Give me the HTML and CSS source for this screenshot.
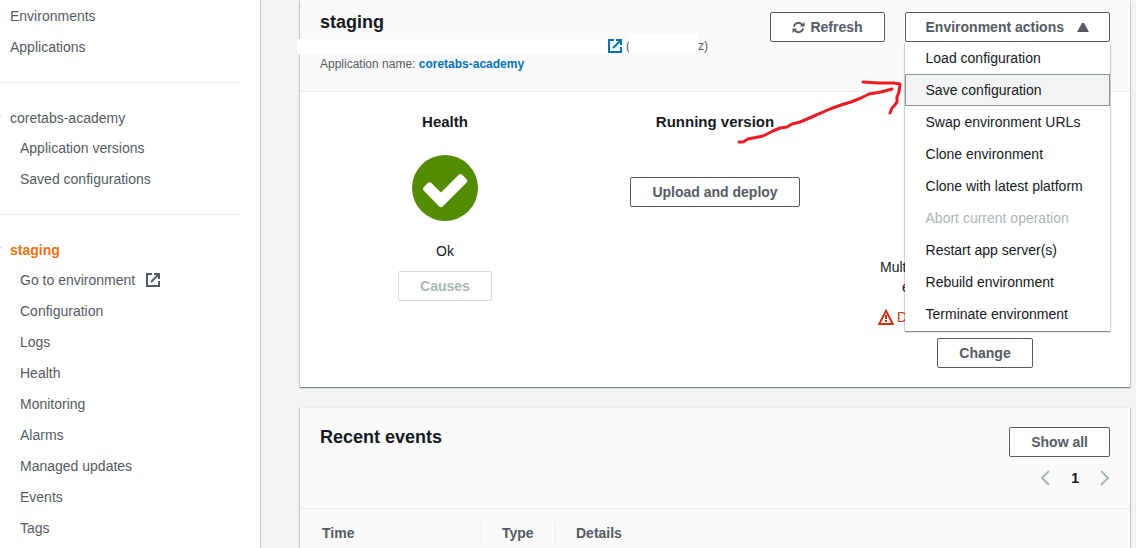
FILE: index.html
```html
<!DOCTYPE html>
<html lang="en">
<head>
<meta charset="utf-8">
<title>staging</title>
<link rel="stylesheet" href="styles.css">
</head>
<body>
<div class="shell">
  <nav class="sidebar">
    <ul class="nav-group">
      <li><a href="#">Environments</a></li>
      <li><a href="#">Applications</a></li>
    </ul>
    <div class="nav-section">
      <a class="nav-title" href="#">coretabs-academy</a>
      <ul class="nav-group nested">
        <li><a href="#">Application versions</a></li>
        <li><a href="#">Saved configurations</a></li>
      </ul>
    </div>
    <div class="nav-section">
      <a class="nav-title current" href="#">staging</a>
      <ul class="nav-group nested">
        <li><a href="#">Go to environment
          <svg class="external" viewBox="0 0 14 14" aria-hidden="true"><path d="M6 1H1v12h12V8M8 1h5v5M13 1L5 9"/></svg></a></li>
        <li><a href="#">Configuration</a></li>
        <li><a href="#">Logs</a></li>
        <li><a href="#">Health</a></li>
        <li><a href="#">Monitoring</a></li>
        <li><a href="#">Alarms</a></li>
        <li><a href="#">Managed updates</a></li>
        <li><a href="#">Events</a></li>
        <li><a href="#">Tags</a></li>
      </ul>
    </div>
  </nav>

  <main class="content">
    <section class="card overview">
      <header class="card-header">
        <div class="summary">
          <h1>staging</h1>
          <div class="url-row">
            <span class="mask mask-url"></span>
            <a href="#" aria-label="Open environment"><svg class="external" viewBox="0 0 14 14" aria-hidden="true"><path d="M6 1H1v12h12V8M8 1h5v5M13 1L5 9"/></svg></a>
            <span class="env-id">(<span class="mask mask-id"></span>z)</span>
          </div>
          <p class="app-name">Application name: <a href="#">coretabs-academy</a></p>
        </div>
        <div class="actions">
          <button class="btn" type="button">
            <svg class="refresh" viewBox="0 0 14 14" aria-hidden="true"><path class="arc" d="M2 6a5 5 0 0 1 8.500-2.500L12 5M12 8a5 5 0 0 1-8.500 2.500L2 9"/><path class="head" d="M13.500 1v5h-5zM.5 13V8h5z"/></svg>
            Refresh</button>
          <div class="dropdown">
            <button class="btn" type="button" aria-haspopup="menu" aria-expanded="true">Environment actions
              <svg class="caret" viewBox="0 0 12 9" aria-hidden="true"><path d="M5 0h2l5 9H0z"/></svg></button>
            <div class="menu" role="menu">
              <button type="button" role="menuitem">Load configuration</button>
              <button type="button" role="menuitem" class="active">Save configuration</button>
              <button type="button" role="menuitem">Swap environment URLs</button>
              <button type="button" role="menuitem">Clone environment</button>
              <button type="button" role="menuitem">Clone with latest platform</button>
              <button type="button" role="menuitem" disabled>Abort current operation</button>
              <button type="button" role="menuitem">Restart app server(s)</button>
              <button type="button" role="menuitem">Rebuild environment</button>
              <button type="button" role="menuitem">Terminate environment</button>
            </div>
          </div>
        </div>
      </header>
      <div class="columns">
        <div class="column">
          <h2>Health</h2>
          <svg class="status" viewBox="0 0 66 66" aria-hidden="true"><circle cx="33" cy="33" r="33"/><path d="M11.600 32.200l4.300-4.300q1.700-1.400 3.400 0L29 37.500 46.800 19.700q1.700-1.400 3.400 0l4.500 4.500q1.400 1.700 0 3.400L30.700 51.500q-1.700 1.400-3.400 0L11.600 35.600q-1.400-1.700 0-3.400z"/></svg>
          <p class="state">Ok</p>
          <button class="btn" type="button" disabled>Causes</button>
        </div>
        <div class="column">
          <h2>Running version</h2>
          <button class="btn deploy" type="button">Upload and deploy</button>
        </div>
        <div class="column platform">
          <p class="platform-name"><span>Mult</span><span class="wrapped">e</span></p>
          <p class="warning"><svg viewBox="0 0 16 16" aria-hidden="true"><path class="outline" d="M8 1.800L14.800 15H1.200z"/><path class="mark" d="M7 6h2v4H7zM7 11h2v2H7z"/></svg>D</p>
          <button class="btn" type="button">Change</button>
        </div>
      </div>
    </section>

    <section class="card">
      <header class="events-header">
        <h1>Recent events</h1>
        <div class="events-tools">
          <button class="btn" type="button">Show all</button>
          <div class="pager">
            <button type="button" aria-label="Previous page"><svg viewBox="0 0 10 16" aria-hidden="true"><path d="M9 1L2 8l7 7"/></svg></button>
            <span>1</span>
            <button type="button" aria-label="Next page"><svg viewBox="0 0 10 16" aria-hidden="true"><path d="M1 1l7 7-7 7"/></svg></button>
          </div>
        </div>
      </header>
      <table class="events">
        <thead><tr><th class="time"><span>Time</span></th><th class="type"><span>Type</span></th><th><span>Details</span></th></tr></thead>
      </table>
    </section>
    <svg class="arrow" viewBox="0 0 170 70" aria-hidden="true"><path d="M4 66h4l5-3 10-2 5-1 10-5 7-3 7-1 5-3 8-2 14-6 16-7 11-4 10-3 10-4 8-4 12-2 11-3M128 6l16 1h15l6 1-1 8-2 5v5l-3 4-2 2-2 5"/></svg>
  </main>
</div>
</body>
</html>
```
FILE: styles.css
```css
* { box-sizing: border-box; }

body {
  margin: 0;
  height: 100vh;
  overflow: hidden;
  background: #f2f3f3;
  color: #16191f;
  font: 14px/20px "Liberation Sans", Arial, sans-serif;
}

h1, h2, p, ul { margin: 0; padding: 0; }
ul { list-style: none; }
a { color: #0073bb; text-decoration: none; }
button { font: inherit; cursor: pointer; }
svg { display: block; }

.shell {
  display: grid;
  grid-template-columns: 261px minmax(0, 1fr);
  min-height: 100vh;
}

/* Sidebar */
.sidebar {
  padding-right: 20px;
  background: #fff;
  border-right: 1px solid #c0c8cb;
}
.sidebar a {
  display: flex;
  align-items: center;
  height: 31px;
  padding-left: 10px;
  color: #545b64;
}
.sidebar .nested a { padding-left: 20px; }
.nav-section {
  margin-top: 20px;
  padding-top: 20px;
  border-top: 1px solid #eaeded;
}
.sidebar .nav-title { position: relative; height: 29px; }
.nav-title::before {
  content: "";
  position: absolute;
  left: -9px;
  top: 12px;
  border: 5px solid transparent;
  border-top-color: #879596;
}
.sidebar .current { color: #ec7211; font-weight: 700; }
.external {
  width: 14px;
  height: 14px;
  fill: none;
  stroke: currentColor;
  stroke-width: 2;
}
.sidebar .external { margin-left: 11px; }

/* Cards */
.content { position: relative; padding: 0 6px 0 39px; }
.card {
  margin-bottom: 20px;
  background: #fff;
  border-top: 1px solid #eaeded;
  box-shadow: 0 1px 1px 0 rgba(0, 28, 36, .3), 1px 1px 1px 0 rgba(0, 28, 36, .15), -1px 1px 1px 0 rgba(0, 28, 36, .15);
}
.overview { border-top: 0; }
.card-header {
  display: flex;
  justify-content: space-between;
  padding: 12px 20px 17px;
  background: #fafafa;
  border-bottom: 1px solid #eaeded;
}
h1 { font-size: 18px; line-height: 20px; }
.url-row {
  display: flex;
  align-items: center;
  height: 22px;
  margin: 3px 0 -3px -23px;
  font-size: 12px;
}
.mask { background: #fff; }
.mask-url { width: 311px; height: 15px; }
.env-id { display: flex; align-items: center; margin-left: 4px; color: #545b64; }
.mask-id { width: 69px; height: 19px; margin: -5px 0 0 -1px; }
.app-name { font-size: 12px; color: #545b64; }
.app-name a { font-weight: 700; }

.actions { display: flex; gap: 20px; }
.btn {
  display: flex;
  align-items: center;
  justify-content: center;
  height: 30px;
  padding: 0 21px;
  background: #fff;
  border: 1px solid #545b64;
  border-radius: 2px;
  color: #545b64;
  font-weight: 700;
  white-space: nowrap;
}
.btn:disabled { border-color: #d5dbdb; color: #aab7b8; }
.refresh { width: 13px; height: 13px; margin-right: 5px; }
.refresh .arc { fill: none; stroke: currentColor; stroke-width: 2; }
.refresh .head { fill: currentColor; }
.dropdown .btn { padding: 0 20px; }
.caret { width: 12px; height: 9px; margin-left: 13px; fill: currentColor; }

.dropdown { position: relative; }
.menu {
  position: absolute;
  z-index: 2;
  top: 30px;
  left: 0;
  right: 0;
  padding-bottom: 1px;
  background: #fff;
  box-shadow: 0 1px 1px 0 rgba(0, 28, 36, .3), 1px 1px 1px 0 rgba(0, 28, 36, .15), -1px 1px 1px 0 rgba(0, 28, 36, .15);
}
.menu button {
  display: block;
  width: 100%;
  height: 32px;
  padding: 0 20px;
  background: none;
  border: 1px solid transparent;
  color: #16191f;
  text-align: left;
  white-space: nowrap;
}
.menu .active { background: #f2f3f3; border-color: #879596; }
.menu button:disabled { color: #aab7b8; }

/* Overview columns */
.columns {
  display: grid;
  grid-template-columns: repeat(3, minmax(0, 1fr));
  padding: 20px 10px 19px;
}
.column { display: flex; flex-direction: column; align-items: center; }
h2 { font-size: 15px; line-height: 20px; }
.status { width: 66px; height: 66px; margin: 23px 0 20px; fill: #538b01; }
.status path { fill: #fff; }
.state { margin-bottom: 10px; }
.deploy { margin-top: 45px; }
.platform { padding-top: 145px; }
.platform-name {
  display: flex;
  flex-direction: column;
  align-items: flex-start;
  width: 210px;
}
.wrapped { margin-left: 22px; }
.warning {
  display: flex;
  gap: 3px;
  width: 214px;
  margin: 10px 0 11px;
  color: #d13212;
}
.warning svg { width: 16px; height: 16px; margin-top: 2px; }
.outline { fill: none; stroke: #d13212; stroke-width: 2; }
.mark { fill: #d13212; }

/* Recent events */
.events-header {
  display: flex;
  justify-content: space-between;
  padding: 19px 20px 20px;
  background: #fafafa;
  border-bottom: 1px solid #eaeded;
}
.events-tools { display: flex; flex-direction: column; align-items: flex-end; gap: 10px; }
.pager { display: flex; align-items: center; gap: 21px; height: 21px; font-weight: 700; }
.pager button { padding: 0; background: none; border: 0; }
.pager svg { width: 10px; height: 16px; fill: none; stroke: #aab7b8; stroke-width: 2; }
.events { width: 100%; border-collapse: collapse; background: #fafafa; }
.events th { height: 48px; padding: 0; color: #545b64; text-align: left; }
.events span { display: block; padding: 2px 20px; border-left: 1px solid #eaeded; }
.events .time { width: 181px; }
.events .time span { padding-left: 21px; border-left-color: transparent; }
.events .type { width: 74px; }

.arrow {
  position: absolute;
  z-index: 3;
  top: 76px;
  right: 231px;
  width: 170px;
  height: 70px;
  fill: none;
  stroke: #ed1c24;
  stroke-width: 3;
  stroke-linecap: round;
  stroke-linejoin: round;
  pointer-events: none;
}
```
